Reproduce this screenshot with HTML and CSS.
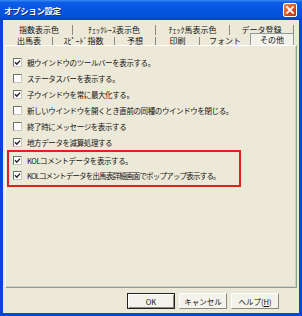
FILE: index.html
```html
<!DOCTYPE html>
<html lang="ja">
<head>
<meta charset="utf-8">
<link rel="stylesheet" href="styles.css">
</head>
<body>
<div class="window">
  <div class="titlebar">
    <span class="title">オプション設定</span>
    <span class="close"><svg width="8" height="8" viewBox="0 0 8 8"><path d="M1 1 L7 7 M7 1 L1 7" stroke="#fff" stroke-width="1.8" stroke-linecap="square"/></svg></span>
  </div>
  <div class="body">
    <div class="tabrow back">
      <span class="tab b1">指数表示色</span>
      <span class="tab b2">ﾁｪｯｸﾚｰｽ表示色</span>
      <span class="tab b3">ﾁｪｯｸ馬表示色</span>
      <span class="tab b4">データ登録</span>
    </div>
    <div class="tabrow front">
      <span class="tab f1">出馬表</span>
      <span class="tab f2">ｽﾋﾟｰﾄﾞ指数</span>
      <span class="tab f3">予想</span>
      <span class="tab f4">印刷</span>
      <span class="tab f5">フォント</span>
      <span class="tab sel">その他</span>
    </div>
    <div class="panel">
      <div class="row"><span class="cb on"><svg viewBox="0 0 7 7"><path d="M1 3.3 L2.8 5.2 L6 1.6" fill="none" stroke="#222" stroke-width="1.4"/></svg></span>親ウインドウのツールバーを表示する。</div>
      <div class="row"><span class="cb"></span>ステータスバーを表示する。</div>
      <div class="row"><span class="cb on"><svg viewBox="0 0 7 7"><path d="M1 3.3 L2.8 5.2 L6 1.6" fill="none" stroke="#222" stroke-width="1.4"/></svg></span>子ウインドウを常に最大化する。</div>
      <div class="row"><span class="cb"></span>新しいウインドウを開くとき直前の同種のウインドウを閉じる。</div>
      <div class="row"><span class="cb"></span>終了時にメッセージを表示する</div>
      <div class="row"><span class="cb on"><svg viewBox="0 0 7 7"><path d="M1 3.3 L2.8 5.2 L6 1.6" fill="none" stroke="#222" stroke-width="1.4"/></svg></span>地方データを減算処理する</div>
      <div class="highlight">
        <div class="row"><span class="cb on"><svg viewBox="0 0 7 7"><path d="M1 3.3 L2.8 5.2 L6 1.6" fill="none" stroke="#222" stroke-width="1.4"/></svg></span>KOLコメントデータを表示する。</div>
        <div class="row"><span class="cb on"><svg viewBox="0 0 7 7"><path d="M1 3.3 L2.8 5.2 L6 1.6" fill="none" stroke="#222" stroke-width="1.4"/></svg></span><span class="tight">KOLコメントデータを出馬表詳細画面でポップアップ表示する。</span></div>
      </div>
    </div>
    <div class="buttons">
      <span class="btn default">OK</span>
      <span class="btn">キャンセル</span>
      <span class="btn">ヘルプ(<u>H</u>)</span>
    </div>
  </div>
</div>
</body>
</html>
```

FILE: styles.css
```css
* { box-sizing: border-box; margin: 0; padding: 0; }
body {
  margin: 0;
  width: 302px;
  height: 316px;
  overflow: hidden;
  font-family: "Noto Sans CJK JP", "Noto Sans", sans-serif;
  color: #111;
}
.window {
  width: 302px;
  height: 316px;
  display: flex;
  flex-direction: column;
  background: #ECE9D8;
}
.titlebar {
  height: 20px;
  flex: none;
  display: flex;
  align-items: center;
  justify-content: space-between;
  padding: 0 5px 0 4px;
  background: linear-gradient(#3A8CF5 0, #0E5EE8 12%, #0756E2 45%, #0453DE 80%, #0443C4 100%);
}
.title {
  color: #fff;
  font-weight: bold;
  font-size: 8.5px;
  letter-spacing: -0.4px;
  text-shadow: 1px 1px 0 #0A2C8C;
}
.close {
  width: 14px;
  height: 14px;
  border: 1px solid #fff;
  border-radius: 2px;
  background: linear-gradient(135deg, #F08A66, #D8461C 60%, #C23A14);
  display: flex;
  align-items: center;
  justify-content: center;
}
.body {
  flex: 1;
  display: flex;
  flex-direction: column;
  border: 3px solid #0A46D6;
  border-top: 0;
  padding: 1px 2px 0 2px;
}
.tabrow {
  display: flex;
  align-items: flex-end;
  padding-left: 1px;
  font-size: 8px;
}
.tabrow.back { height: 14px; }
.tabrow.front { height: 10px; }
.tab {
  border-right: 1px solid #8A897C;
  text-align: center;
  white-space: nowrap;
}
.back .tab { height: 10px; line-height: 10px; }
.front .tab { height: 8px; line-height: 8px; }
.b1 { width: 67px; }
.b2 { width: 83px; }
.b3 { width: 74px; }
.b4 { width: 64px; }
.f1 { width: 47px; }
.f2 { width: 62px; }
.f3 { width: 41px; }
.f4 { width: 44px; }
.f5 { width: 50px; border-right: 0; }
.front .tab.sel {
  width: 44px;
  height: 12px;
  line-height: 11px;
  border: 1px solid #919B9C;
  border-bottom: 0;
  background: #F2F1EA;
}
.panel {
  height: 243px;
  flex: none;
  border: 1px solid #919B9C;
  border-top-color: #fff;
  border-left-color: #fff;
  box-shadow: inset -1px -1px 0 #D4D0C0;
  padding: 8px 0 0 7px;
  font-size: 7.5px;
  letter-spacing: -0.4px;
}
.row {
  height: 16px;
  display: flex;
  align-items: center;
  gap: 5px;
  white-space: nowrap;
}
.tight { letter-spacing: -0.8px; }
.cb {
  width: 9px;
  height: 9px;
  flex: none;
  background: #fff;
  border: 1px solid #6F6F6F;
  border-right-color: #C9C7BA;
  border-bottom-color: #C9C7BA;
  display: flex;
}
.cb svg { width: 7px; height: 7px; }
.highlight {
  width: 234px;
  margin-left: -6px;
  border: 2px solid #E0211E;
  padding: 1px 0 0 4px;
  height: 37px;
}
.highlight .row { height: 15px; }
.buttons {
  display: flex;
  justify-content: flex-end;
  gap: 4px;
  margin-top: 5px;
  padding-right: 18px;
}
.btn {
  width: 48px;
  height: 16px;
  display: flex;
  align-items: center;
  justify-content: center;
  font-size: 7.5px;
  background: #F3F2EB;
  border: 1px solid;
  border-color: #fff #8A897C #8A897C #fff;
}
.btn.default {
  border: 1px solid #222;
  box-shadow: inset 1px 1px 0 #fff, inset -1px -1px 0 #8A897C;
}
```
